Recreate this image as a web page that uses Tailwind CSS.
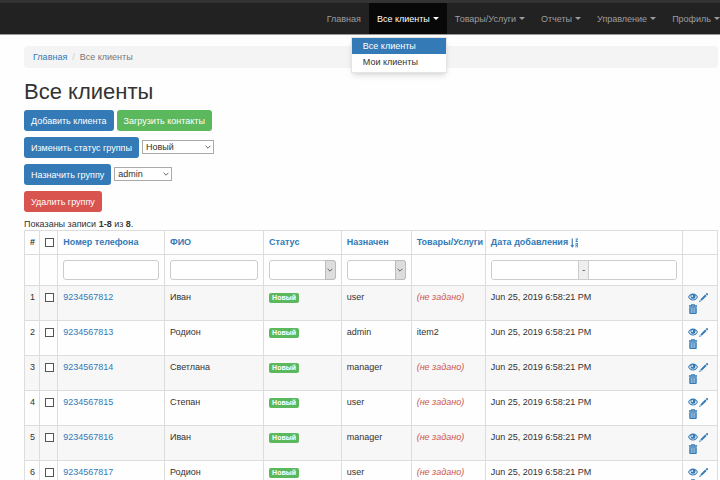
<!DOCTYPE html>
<html lang="ru">
<head>
    <meta charset="UTF-8">
    <meta name="viewport" content="width=device-width, initial-scale=1.0">
    <title>Все клиенты</title>
    <script src="https://cdn.jsdelivr.net/npm/@tailwindcss/browser@4"></script>
</head>
<body class="bg-[#fefefe] font-['Liberation_Sans',Arial,sans-serif] text-[9px] leading-[12px] text-[#333] overflow-x-hidden">
    <svg class="hidden" xmlns="http://www.w3.org/2000/svg">
        <symbol id="icon-eye" viewBox="0 0 20 16">
            <path fill="currentColor" fill-rule="evenodd" d="M10 1C5.500 1 1.800 4.500 0 8c1.800 3.500 5.500 7 10 7S18.200 11.500 20 8C18.200 4.500 14.500 1 10 1zM10 13C6.800 13 3.900 11 2.200 8 3 6.600 4.200 5.400 5.500 4.500a5 5 0 1 0 9 0C15.800 5.400 17 6.600 17.800 8 16.100 11 13.200 13 10 13zM8 4a2 2 0 0 1 2 2 2 2 0 0 1-2.800 1.800A3 3 0 0 1 8 4z"/>
        </symbol>
        <symbol id="icon-pencil" viewBox="0 0 16 16">
            <path fill="currentColor" d="M13.300.400a1.300 1.300 0 0 1 1.800 0l.700.700a1.300 1.300 0 0 1 0 1.800L14.400 4.300 11.900 1.800zM11 2.700l2.500 2.500-8.700 8.700-2.500-2.500zM1.600 12.300l2.300 2.300L0 16z"/>
        </symbol>
        <symbol id="icon-trash" viewBox="0 0 14 16">
            <path fill="currentColor" fill-rule="evenodd" d="M5 0h4a1 1 0 0 1 1 1v1h3.500v2.200H.500V2H4V1a1 1 0 0 1 1-1zm.200 1.200V2h3.600v-.800zM1 5h12v9.500a1.500 1.500 0 0 1-1.500 1.500h-9A1.500 1.500 0 0 1 1 14.500zM3.500 6.500v8h1v-8zm3 0v8h1v-8zm3 0v8h1v-8z"/>
        </symbol>
        <symbol id="icon-sort" viewBox="0 0 16 18">
            <path fill="currentColor" d="M3 1h2v12h2.500L4 17.500.500 13H3zM10 1h4v1.500l-2.500 3H14V7h-4V5.500l2.500-3H10zM10 9h4v8h-1.300v-2.500h-1.400V17H10zm1.300 1.300v2.700h1.400v-2.700z"/>
        </symbol>
        <symbol id="icon-chevron" viewBox="0 0 10 6">
            <path fill="none" stroke="currentColor" stroke-width="1.500" d="M1 1l4 4 4-4"/>
        </symbol>
    </svg>

    <nav class="bg-[#222] border-t-[3px] border-t-[#333] border-b border-b-[#999]">
        <ul class="flex justify-end h-[31px] text-[#9d9d9d]">
            <li><a href="#" class="flex items-center h-full px-2">Главная</a></li>
            <li class="relative">
                <a href="#" class="flex items-center gap-[3px] h-full px-2 bg-[#080808] text-white">Все клиенты <span class="border-x-[3px] border-t-[3px] border-x-transparent border-t-current"></span></a>
                <ul class="absolute right-0 top-full mt-[3px] w-24 z-10 bg-white border border-black/10 shadow-md text-[#333]">
                    <li><a href="#" class="block px-[11px] py-[2px] bg-[#337ab7] text-white">Все клиенты</a></li>
                    <li><a href="#" class="block px-[11px] pt-[2px] pb-1">Мои клиенты</a></li>
                </ul>
            </li>
            <li><a href="#" class="flex items-center gap-[3px] h-full px-2">Товары/Услуги <span class="border-x-[3px] border-t-[3px] border-x-transparent border-t-current"></span></a></li>
            <li><a href="#" class="flex items-center gap-[3px] h-full px-2">Отчеты <span class="border-x-[3px] border-t-[3px] border-x-transparent border-t-current"></span></a></li>
            <li><a href="#" class="flex items-center gap-[3px] h-full px-2">Управление <span class="border-x-[3px] border-t-[3px] border-x-transparent border-t-current"></span></a></li>
            <li><a href="#" class="flex items-center gap-[3px] h-full pl-2">Профиль <span class="border-x-[3px] border-t-[3px] border-x-transparent border-t-current"></span></a></li>
        </ul>
    </nav>

    <main class="pl-6 pr-[2px] pt-[11px]">
        <ol class="flex bg-[#f4f4f4] rounded-sm px-[9px] py-[5px] text-[#777]">
            <li><a href="#" class="text-[#337ab7]">Главная</a></li>
            <li class="px-[5px] text-[#ccc]">/</li>
            <li>Все клиенты</li>
        </ol>

        <h1 class="mt-3 text-[22px] leading-[24px]">Все клиенты</h1>

        <div class="mt-[6px] flex flex-col gap-[6px]">
            <div class="flex gap-[3px]">
                <button type="button" class="h-[21px] px-[7px] rounded-[3px] bg-[#337ab7] text-white">Добавить клиента</button>
                <button type="button" class="h-[21px] px-[7px] rounded-[3px] bg-[#5cb85c] text-white">Загрузить контакты</button>
            </div>
            <div class="flex gap-[3px]">
                <button type="button" class="h-[21px] px-[7px] rounded-[3px] bg-[#337ab7] text-white">Изменить статус группы</button>
                <div class="relative mt-[3px] w-[72px] h-[14px]">
                    <select aria-label="Статус группы" class="appearance-none block w-full h-full pl-[3px] bg-white border border-[#aaa]">
                        <option>Новый</option>
                    </select>
                    <svg class="absolute right-[3px] top-[5px] w-[6px] h-1 text-[#555] pointer-events-none"><use href="#icon-chevron"/></svg>
                </div>
            </div>
            <div class="flex gap-[3px]">
                <button type="button" class="h-[21px] px-[7px] rounded-[3px] bg-[#337ab7] text-white">Назначить группу</button>
                <div class="relative mt-[3px] w-[58px] h-[14px]">
                    <select aria-label="Назначить" class="appearance-none block w-full h-full pl-[3px] bg-white border border-[#aaa]">
                        <option>admin</option>
                    </select>
                    <svg class="absolute right-[3px] top-[5px] w-[6px] h-1 text-[#555] pointer-events-none"><use href="#icon-chevron"/></svg>
                </div>
            </div>
            <div class="flex">
                <button type="button" class="h-[21px] px-[7px] rounded-[3px] bg-[#d9534f] text-white">Удалить группу</button>
            </div>
        </div>

        <div class="mt-[6px]">Показаны записи <b>1-8</b> из <b>8</b>.</div>

        <table class="w-full table-fixed border-collapse border border-[#ddd] [&_td]:border [&_td]:border-[#ddd] [&_th]:border [&_th]:border-[#ddd] [&_td]:p-[5px] [&_th]:p-[5px] [&_td]:align-top [&_th]:text-left [&_th]:whitespace-nowrap">
            <colgroup>
                <col class="w-[2.2%]">
                <col class="w-[2.6%]">
                <col class="w-[15.4%]">
                <col class="w-[14.300%]">
                <col class="w-[11.2%]">
                <col class="w-[10.1%]">
                <col class="w-[10.7%]">
                <col class="w-[28.4%]">
                <col class="w-[5.1%]">
            </colgroup>
            <thead>
                <tr class="leading-[13px]">
                    <th>#</th>
                    <th><input type="checkbox" aria-label="Выбрать все" class="appearance-none block w-[9px] h-[9px] bg-white border border-[#555]"></th>
                    <th><a href="#" class="text-[#337ab7]">Номер телефона</a></th>
                    <th><a href="#" class="text-[#337ab7]">ФИО</a></th>
                    <th><a href="#" class="text-[#337ab7]">Статус</a></th>
                    <th><a href="#" class="text-[#337ab7]">Назначен</a></th>
                    <th><a href="#" class="text-[#337ab7]">Товары/Услуги</a></th>
                    <th><a href="#" class="flex items-center gap-[2px] text-[#337ab7]">Дата добавления <svg class="w-[9px] h-[10px]"><use href="#icon-sort"/></svg></a></th>
                    <th></th>
                </tr>
                <tr>
                    <td></td>
                    <td></td>
                    <td><input type="text" aria-label="Номер телефона" class="block w-full h-[20px] px-2 bg-white border border-[#ccc] rounded-[3px]"></td>
                    <td><input type="text" aria-label="ФИО" class="block w-full h-[20px] px-2 bg-white border border-[#ccc] rounded-[3px]"></td>
                    <td>
                        <div class="relative">
                            <select aria-label="Статус" class="appearance-none block w-full h-[20px] px-2 bg-white border border-[#ccc] rounded-[3px]"><option></option></select>
                            <span class="absolute right-0 inset-y-0 w-[11px] flex items-center justify-center bg-[#ddd] border border-[#bbb] rounded-r-[3px] text-[#555] pointer-events-none"><svg class="w-[6px] h-1"><use href="#icon-chevron"/></svg></span>
                        </div>
                    </td>
                    <td>
                        <div class="relative">
                            <select aria-label="Назначен" class="appearance-none block w-full h-[20px] px-2 bg-white border border-[#ccc] rounded-[3px]"><option></option></select>
                            <span class="absolute right-0 inset-y-0 w-[11px] flex items-center justify-center bg-[#ddd] border border-[#bbb] rounded-r-[3px] text-[#555] pointer-events-none"><svg class="w-[6px] h-1"><use href="#icon-chevron"/></svg></span>
                        </div>
                    </td>
                    <td></td>
                    <td>
                        <div class="flex h-[20px] border border-[#ccc] rounded-[3px] overflow-hidden">
                            <input type="text" aria-label="Дата от" class="flex-1 min-w-0 px-2 bg-white">
                            <span class="w-[11px] flex items-center justify-center bg-[#eee] border-x border-[#ccc]">-</span>
                            <input type="text" aria-label="Дата до" class="flex-1 min-w-0 px-2 bg-white">
                        </div>
                    </td>
                    <td></td>
                </tr>
            </thead>
            <tbody id="table-body"></tbody>
        </table>
    </main>

    <script>
        var clients = [
            { phone: '9234567812', name: 'Иван', user: 'user', item: '' },
            { phone: '9234567813', name: 'Родион', user: 'admin', item: 'item2' },
            { phone: '9234567814', name: 'Светлана', user: 'manager', item: '' },
            { phone: '9234567815', name: 'Степан', user: 'user', item: '' },
            { phone: '9234567816', name: 'Иван', user: 'manager', item: '' },
            { phone: '9234567817', name: 'Родион', user: 'user', item: '' }
        ];

        var html = '';
        clients.forEach(function(row, index) {
            html += '<tr class="odd:bg-[#f7f7f7]">';
            html += '<td>' + (index + 1) + '</td>';
            html += '<td><input type="checkbox" aria-label="Выбрать ' + row.phone + '" class="appearance-none block mt-[2px] w-[9px] h-[9px] bg-white border border-[#555]"></td>';
            html += '<td><a href="#" class="text-[#337ab7]">' + row.phone + '</a></td>';
            html += '<td>' + row.name + '</td>';
            html += '<td><span class="block w-[30px] mt-[2px] bg-[#5cb85c] rounded-[2px] text-white text-center text-[7px] leading-[10px] font-bold">Новый</span></td>';
            html += '<td>' + row.user + '</td>';
            html += '<td>' + (row.item || '<em class="text-[#c55]">(не задано)</em>') + '</td>';
            html += '<td>Jun 25, 2019 6:58:21 PM</td>';
            html += '<td><div class="flex flex-wrap gap-x-[1px] text-[#337ab7]">';
            html += '<a href="#" aria-label="Просмотр" class="flex items-center h-3"><svg class="w-[10px] h-2"><use href="#icon-eye"/></svg></a>';
            html += '<a href="#" aria-label="Редактировать" class="flex items-center h-3"><svg class="w-[9px] h-[9px]"><use href="#icon-pencil"/></svg></a>';
            html += '<a href="#" aria-label="Удалить" class="flex items-center h-3"><svg class="w-[10px] h-[10px]"><use href="#icon-trash"/></svg></a>';
            html += '</div></td></tr>';
        });
        document.getElementById('table-body').innerHTML = html;
    </script>
</body>
</html>
